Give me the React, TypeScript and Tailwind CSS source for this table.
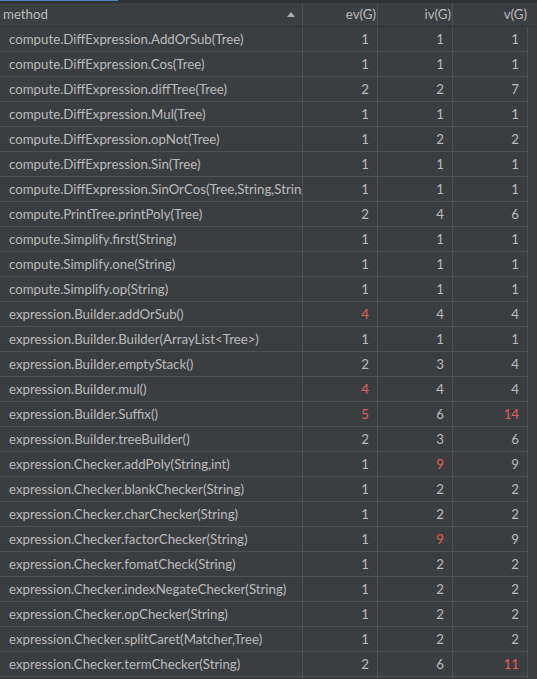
import React from "react";

type Row = { m: string; ev: number | ""; iv: number | ""; v: number | ""; red?: ("ev" | "iv" | "v")[] };

const rows: Row[] = [
  { m: "compute.DiffExpression.AddOrSub(Tree)", ev: 1, iv: 1, v: 1 },
  { m: "compute.DiffExpression.Cos(Tree)", ev: 1, iv: 1, v: 1 },
  { m: "compute.DiffExpression.diffTree(Tree)", ev: 2, iv: 2, v: 7 },
  { m: "compute.DiffExpression.Mul(Tree)", ev: 1, iv: 1, v: 1 },
  { m: "compute.DiffExpression.opNot(Tree)", ev: 1, iv: 2, v: 2 },
  { m: "compute.DiffExpression.Sin(Tree)", ev: 1, iv: 1, v: 1 },
  { m: "compute.DiffExpression.SinOrCos(Tree,String,String)", ev: 1, iv: 1, v: 1 },
  { m: "compute.PrintTree.printPoly(Tree)", ev: 2, iv: 4, v: 6 },
  { m: "compute.Simplify.first(String)", ev: 1, iv: 1, v: 1 },
  { m: "compute.Simplify.one(String)", ev: 1, iv: 1, v: 1 },
  { m: "compute.Simplify.op(String)", ev: 1, iv: 1, v: 1 },
  { m: "expression.Builder.addOrSub()", ev: 4, iv: 4, v: 4, red: ["ev"] },
  { m: "expression.Builder.Builder(ArrayList<Tree>)", ev: 1, iv: 1, v: 1 },
  { m: "expression.Builder.emptyStack()", ev: 2, iv: 3, v: 4 },
  { m: "expression.Builder.mul()", ev: 4, iv: 4, v: 4, red: ["ev"] },
  { m: "expression.Builder.Suffix()", ev: 5, iv: 6, v: 14, red: ["ev", "v"] },
  { m: "expression.Builder.treeBuilder()", ev: 2, iv: 3, v: 6 },
  { m: "expression.Checker.addPoly(String,int)", ev: 1, iv: 9, v: 9, red: ["iv"] },
  { m: "expression.Checker.blankChecker(String)", ev: 1, iv: 2, v: 2 },
  { m: "expression.Checker.charChecker(String)", ev: 1, iv: 2, v: 2 },
  { m: "expression.Checker.factorChecker(String)", ev: 1, iv: 9, v: 9, red: ["iv"] },
  { m: "expression.Checker.fomatCheck(String)", ev: 1, iv: 2, v: 2 },
  { m: "expression.Checker.indexNegateChecker(String)", ev: 1, iv: 2, v: 2 },
  { m: "expression.Checker.opChecker(String)", ev: 1, iv: 2, v: 2 },
  { m: "expression.Checker.splitCaret(Matcher,Tree)", ev: 1, iv: 2, v: 2 },
  { m: "expression.Checker.termChecker(String)", ev: 2, iv: 6, v: 11, red: ["v"] },
  { m: "", ev: "", iv: "", v: "" },
];

function Num({ value, red }: { value: number | ""; red?: boolean }) {
  return (
    <div className={`h-full w-[75px] shrink-0 border-r border-[#4e5052] pr-[8px] text-right ${red ? "text-[#e35c5c]" : ""}`}>
      {value}
    </div>
  );
}

export default function App() {
  return (
    <div
      className="w-[537px] h-[679px] overflow-hidden bg-[#3b3e41] text-[13.25px] text-[#bbbbbb]"
      style={{ fontFamily: 'Lato, "Noto Sans", sans-serif' }}
    >
      {/* tab strip */}
      <div className="h-[3px] bg-[#2f3133]">
        <div className="h-[1px] w-[118px] bg-[#4a88c7]" />
      </div>

      {/* header */}
      <div className="flex h-[24px] items-center border-b border-[#323435] bg-[#3c3f41] leading-[23px]">
        <div className="flex w-[303px] shrink-0 items-center justify-between border-r border-[#4e5052] pl-[3px] pr-[7px]">
          <span>method</span>
          <svg width="8" height="5" viewBox="0 0 8 5" className="fill-[#a9abad]">
            <path d="M0 5 L4 0 L8 5 Z" />
          </svg>
        </div>
        <div className="w-[75px] shrink-0 border-r border-[#4e5052] pr-[1px] text-right">ev(G)</div>
        <div className="w-[75px] shrink-0 border-r border-[#4e5052] pr-[1px] text-right">iv(G)</div>
        <div className="w-[75px] shrink-0 pr-[1px] text-right">v(G)</div>
      </div>

      {rows.map((r, i) => (
        <div key={i} className="flex h-[25px] w-[528px] items-center border-b border-[#4e5052] leading-[24px]">
          <div className="h-full w-[303px] shrink-0 overflow-hidden whitespace-nowrap border-r border-[#4e5052] pl-[9px]">
            {r.m}
          </div>
          <Num value={r.ev} red={r.red?.includes("ev")} />
          <Num value={r.iv} red={r.red?.includes("iv")} />
          <Num value={r.v} red={r.red?.includes("v")} />
        </div>
      ))}
    </div>
  );
}
